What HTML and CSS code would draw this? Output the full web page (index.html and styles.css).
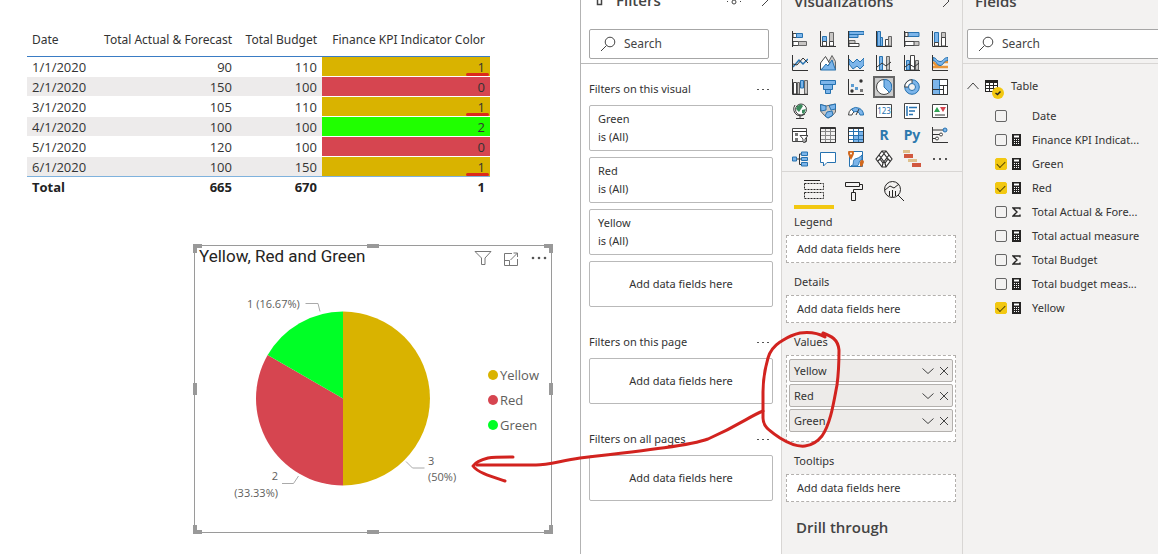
FILE: index.html
```html
<!DOCTYPE html>
<html lang="en">
<head>
<meta charset="utf-8">
<title>Report editor</title>
<link rel="stylesheet" href="styles.css">
</head>
<body>
<svg class="defs" width="0" height="0" aria-hidden="true">
  <symbol id="search" viewBox="0 0 16 16"><circle cx="10" cy="6" r="4.8"/><path d="M6.5 9.5 1 15"/></symbol>
  <symbol id="calc" viewBox="0 0 9 12"><path fill="#252423" stroke="none" d="M0 0h9v12H0z"/><path fill="#fff" stroke="none" d="M2 1.5h5v2H2zM2 5h1v1H2zM4 5h1v1H4zM6 5h1v1H6zM2 7h1v1H2zM4 7h1v1H4zM6 7h1v1H6zM2 9h1v1H2zM4 9h1v1H4zM6 9h1v1H6z"/></symbol>
  <symbol id="sigma" viewBox="0 0 9 12"><path d="M8 3.5V2H1l4 4-4 4h7V8.5" stroke="#252423" stroke-width="1.4"/></symbol>
  <symbol id="down" viewBox="0 0 12 12"><path d="m.5 3.5 5.500 5 5.500-5"/></symbol>
  <symbol id="close" viewBox="0 0 12 12"><path d="m2 2 8 8M10 2 2 10"/></symbol>
  <symbol id="dots" viewBox="0 0 12 4"><path fill="#555" stroke="none" d="M0 2h2v1H0zM5 2h2v1H5zM10 2h2v1h-2z"/></symbol>
</svg>
<div class="app">
  <main class="canvas">
    <table class="data">
      <thead><tr><th>Date</th><th>Total Actual &amp; Forecast</th><th>Total Budget</th><th>Finance KPI Indicator Color</th></tr></thead>
      <tbody>
        <tr><td>1/1/2020</td><td>90</td><td>110</td><td class="amber marked">1</td></tr>
        <tr><td>2/1/2020</td><td>150</td><td>100</td><td class="red">0</td></tr>
        <tr><td>3/1/2020</td><td>105</td><td>110</td><td class="amber marked">1</td></tr>
        <tr><td>4/1/2020</td><td>100</td><td>100</td><td class="green">2</td></tr>
        <tr><td>5/1/2020</td><td>120</td><td>100</td><td class="red">0</td></tr>
        <tr><td>6/1/2020</td><td>100</td><td>150</td><td class="amber marked">1</td></tr>
      </tbody>
      <tfoot><tr><td>Total</td><td>665</td><td>670</td><td>1</td></tr></tfoot>
    </table>

    <section class="visual">
      <i class="grip nw"></i><i class="grip ne"></i><i class="grip sw"></i><i class="grip se"></i>
      <i class="grip n"></i><i class="grip s"></i><i class="grip w"></i><i class="grip e"></i>
      <header class="visual-head">
        <h1>Yellow, Red and Green</h1>
        <div class="visual-tools">
          <button aria-label="Filter"><svg width="18" height="18" viewBox="0 0 18 18"><path d="M1 1.500h16l-6 6.500v6.500H7.500V8z"/></svg></button>
          <button aria-label="Focus mode"><svg width="18" height="18" viewBox="0 0 18 18"><path d="M10 3.500H2.500v12h13V9M2.500 10.500h5v5M8.500 10l7-7M11.500 3h4v4"/></svg></button>
          <button aria-label="More options"><svg width="18" height="18" viewBox="0 0 18 18"><g fill="#555" stroke="none"><circle cx="3" cy="8" r="1.300"/><circle cx="9" cy="8" r="1.300"/><circle cx="15" cy="8" r="1.300"/></g></svg></button>
        </div>
      </header>
      <div class="visual-body">
        <svg class="pie" width="240" height="240" viewBox="223 280 240 240" role="img" aria-label="Pie chart">
          <path fill="#d9b300" d="M343 311.500a87 87 0 0 1 0 174z"/>
          <path fill="#d64550" d="M343 398.500v87a87 87 0 0 1-75.340-130.500z"/>
          <path fill="#00ff26" d="M343 398.500l-75.340-43.500a87 87 0 0 1 75.340-43.500z"/>
          <path class="leader" d="M305.500 303.500h12.500l2 8M406 461.500l6.500 6.500h12M282 483.500h11.500l5-7.500"/>
          <text x="247" y="308">1 (16.67%)</text>
          <text x="428" y="465">3</text><text x="428" y="481">(50%)</text>
          <text x="278" y="480" text-anchor="end">2</text><text x="278" y="497" text-anchor="end">(33.33%)</text>
        </svg>
        <ul class="legend">
          <li class="k-amber">Yellow</li><li class="k-red">Red</li><li class="k-green">Green</li>
        </ul>
      </div>
    </section>
  </main>

  <aside class="pane filters">
    <header class="pane-head">
      <svg class="funnel" width="9" height="12" viewBox="0 0 9 12"><path d="M2.500 0v10.500h4V0" stroke-width="1.500"/></svg>
      <h2>Filters</h2>
      <svg class="eye" width="14" height="10" viewBox="0 0 14 10"><circle cx="7" cy="7" r="2"/><path d="M1 6 0 7M3 3v2M11 3v2M13 6l1 1"/></svg>
      <svg width="12" height="14" viewBox="0 0 12 14"><path d="m3 1 6 6-6 6"/></svg>
    </header>
    <div class="search-row"><label class="search"><svg width="16" height="16"><use href="#search"/></svg><input placeholder="Search" aria-label="Search filters"></label></div>
    <section class="group">
      <h3>Filters on this visual <button aria-label="More"><svg width="12" height="4"><use href="#dots"/></svg></button></h3>
      <div class="card"><span>Green</span><span>is (All)</span></div>
      <div class="card"><span>Red</span><span>is (All)</span></div>
      <div class="card"><span>Yellow</span><span>is (All)</span></div>
      <div class="card drop">Add data fields here</div>
    </section>
    <section class="group">
      <h3>Filters on this page <button aria-label="More"><svg width="12" height="4"><use href="#dots"/></svg></button></h3>
      <div class="card drop">Add data fields here</div>
    </section>
    <section class="group">
      <h3>Filters on all pages <button aria-label="More"><svg width="12" height="4"><use href="#dots"/></svg></button></h3>
      <div class="card drop">Add data fields here</div>
    </section>
  </aside>

  <aside class="pane viz">
    <header class="pane-head">
      <h2>Visualizations</h2>
      <svg width="12" height="14" viewBox="0 0 12 14"><path d="m3 1 6 6-6 6"/></svg>
    </header>
    <div class="gallery">
      <button aria-label="Stacked bar"><svg viewBox="0 0 16 16"><path class="w" d="M1 2.500h4v4H1z"/><path class="b" d="M4.500 2.500h6v4h-6z"/><path class="w" d="M1 10.500h6v4H1z"/><path class="g" d="M6.500 10.500h8v4h-8z"/><path class="k" d="M.5 0v16"/></svg></button>
      <button aria-label="Stacked column"><svg viewBox="0 0 16 16"><path class="b" d="M2.500 5.500h4V15h-4z"/><path class="w" d="M2.500 10.500h4V15h-4z"/><path class="g" d="M9.500 1.500h4V15h-4z"/><path class="w" d="M9.500 10.500h4V15h-4z"/><path class="k" d="M.5 0v15.500H16"/></svg></button>
      <button aria-label="Clustered bar"><svg viewBox="0 0 16 16"><path class="b" d="M1 .5h15v3H1zM1 3.500h9v3H1z"/><path class="g" d="M1 9.500h6v3H1z"/><path class="w" d="M1 12.500h10v3H1z"/><path class="k" d="M.5 0v16"/></svg></button>
      <button aria-label="Clustered column"><svg viewBox="0 0 16 16"><path class="b" d="M1.500.5h3V15h-3zM4.500 6.500h2V15h-2z"/><path class="w" d="M9.500 8.500h3V15h-3z"/><path class="g" d="M12.500 5.500h3V15h-3z"/><path class="k" d="M.5 0v15.500H16"/></svg></button>
      <button aria-label="100% stacked bar"><svg viewBox="0 0 16 16"><path class="b" d="M1 1.500h14v4H1z"/><path class="w" d="M1 1.500h3v4H1z"/><path class="g" d="M1 10.500h14v4H1z"/><path class="w" d="M1 10.500h9v4H1z"/><path class="k" d="M.5 0v16"/></svg></button>
      <button aria-label="100% stacked column"><svg viewBox="0 0 16 16"><path class="b" d="M2.500 1.500h4V15h-4z"/><path class="w" d="M2.500 11.500h4V15h-4z"/><path class="g" d="M9.500 1.500h4V15h-4z"/><path class="w" d="M9.500 6.500h4V15h-4z"/><path class="k" d="M.5 0v15.500H16"/></svg></button>

      <button aria-label="Line"><svg viewBox="0 0 16 16"><path class="l" d="m1 12 6-7 4 4 5-5" stroke-width="1.500"/><path class="k" d="m1 9 4 1 6-7 5 5M.5 0v15.500H16"/></svg></button>
      <button aria-label="Area"><svg viewBox="0 0 16 16"><path class="g" d="M8 8 12 .5l3.500 6V15z"/><path class="w" d="M.5 15V8L5.500 1.500 10 9z"/><path class="b" d="m1 15 5-6 2 2 4-6 3.500 10z"/></svg></button>
      <button aria-label="Stacked area"><svg viewBox="0 0 16 16"><path class="b" d="m1 4 4 4 4-4 3 3 4-4v7l-4 4-3-3-4 3-4-5z"/><path class="k" d="M.5 0v15.500H16"/></svg></button>
      <button aria-label="Line and stacked column"><svg viewBox="0 0 16 16"><path class="b" d="M3.500 1.500h3V15h-3z"/><path class="g" d="M10.500 1.500h3V15h-3z"/><path class="k" d="m1 12 5-4 4 3 5-4M.5 0v15.500H16"/></svg></button>
      <button aria-label="Line and clustered column"><svg viewBox="0 0 16 16"><path class="b" d="M2.500 5.500h3V15h-3z"/><path class="w" d="M6.500.5h4V15h-4z"/><path class="g" d="M11.500 5.500h3V15h-3z"/><path class="k" d="m1 12 4-3 5 3 5-4M.5 0v15.500H16"/></svg></button>
      <button aria-label="Ribbon"><svg viewBox="0 0 16 16"><path d="M1 12h4l6-5h5M1 7l5 5h10" stroke="#e8963b" stroke-width="2.500"/><path class="b" d="M1 2.500c4 0 3 4 7 4s3-4 8-4v3c-5 0-4 5-8 5s-3-5-7-5z"/><path class="k" d="M.5 0v15.500H16"/></svg></button>

      <button aria-label="Waterfall"><svg viewBox="0 0 16 16"><path class="w" d="M1.500 3.500h3V15h-3z"/><path class="g" d="M5.500 3.500h2V15h-2zM12.500 1.500h3V15h-3z"/><path class="b" d="M8.500 1.500h3V9h-3z"/><path class="k" d="M.5 0v15.500H16"/></svg></button>
      <button aria-label="Funnel"><svg viewBox="0 0 16 16"><path class="b" d="M.5 1.500h15v4H.5zM3.500 5.500h9v5h-9zM5.500 10.500h5v4h-5z"/></svg></button>
      <button aria-label="Scatter"><svg viewBox="0 0 16 16"><g fill="#333"><circle cx="13" cy="2" r="1.700"/><circle cx="4" cy="12" r="1.700"/></g><path fill="#5b9bd0" d="M3 5h3v3H3zM7 8h3v3H7z"/><path fill="#777" d="M12 10h3v3h-3z"/><path class="k" d="M.5 0v15.500H16"/></svg></button>
      <button class="chosen" aria-label="Pie"><svg viewBox="0 0 16 16"><circle class="w" cx="8" cy="8" r="7.500"/><path class="b" d="M8 .5V8l5.500 5.500A7.500 7.500 0 0 0 8 .5z"/></svg></button>
      <button aria-label="Donut"><svg viewBox="0 0 16 16"><circle class="b" cx="8" cy="8" r="7.300"/><path class="w" d="M8 .7V4.500A3.500 3.500 0 0 0 4.500 8H.7A7.300 7.300 0 0 1 8 .7z"/><circle class="hole" cx="8" cy="8" r="3.500"/></svg></button>
      <button aria-label="Treemap"><svg viewBox="0 0 16 16"><path class="w" d="M.5.500h15v15H.5z"/><path class="b" d="M.5.500h7v15h-7z"/><path class="k" d="M.5 10.500h7M7.500 6.500h8M11.500 6.500v9M7.500 10.500h4M.5.500h15v15H.5z"/></svg></button>

      <button aria-label="Map"><svg viewBox="0 0 16 16"><circle class="w" cx="9" cy="6.500" r="5.500"/><path fill="#3b8a5c" d="m5 3 4-2 2 2-2 3-2 3-3-3zM10 7l4-1-2 5-2-1z"/><path class="k" d="M3 2a7 7 0 0 0 2 10 7 7 0 0 0 8-1M8 13v2.500M4 15.500h8"/></svg></button>
      <button aria-label="Filled map"><svg viewBox="0 0 16 16"><path class="g" d="M.5 1.500 6 3l9.500-2v8L12 13l-4 2-4-3-3.500-4z"/><path class="b" d="M.5 1.500 6 3v4L1 8zM9 2.500l6.500-1.500v5L11 7zM7 9l5-1 1 4-5 3-3-2z"/></svg></button>
      <button aria-label="Gauge"><svg viewBox="0 0 16 16"><path class="w" d="M.5 12a7.500 7.500 0 0 1 3-6l2.500 3A4 4 0 0 0 4 12z"/><path class="b" d="M3.500 6a7.500 7.500 0 0 1 12 6H12a4 4 0 0 0-6-3z"/><path class="k" d="m8 12 3-6"/></svg></button>
      <button aria-label="Card"><svg viewBox="0 0 16 16"><path class="w" d="M.5 1.500h15v13H.5z"/><text x="8" y="11">123</text></svg></button>
      <button aria-label="Multi-row card"><svg viewBox="0 0 16 16"><path class="w" d="M.5.500h15v15H.5z"/><path stroke="#2672b0" stroke-width="1.500" d="M5 4.500h8M5 8h6M5 11.500h4M3 3v10"/></svg></button>
      <button aria-label="KPI"><svg viewBox="0 0 16 16"><path class="w" d="M.5 1.500h15v13H.5z"/><path fill="#31a354" d="m2 9 3-5 3 5z"/><path fill="#d64550" d="m8 4 3 5 3-5z"/><path class="k" d="M3 12h10"/></svg></button>

      <button aria-label="Slicer"><svg viewBox="0 0 16 16"><path class="w" d="M.5 1.500h14v13H.5z"/><path class="k" d="M.5 4.500h14"/><path fill="#777" d="M3 6h3v3H3zM3 11h3v3H3z"/><path class="w" d="M8 8.500h8l-3 3.500v4l-2-1v-3z"/></svg></button>
      <button aria-label="Table"><svg viewBox="0 0 16 16"><path fill="#fff" stroke="#888" d="M.5 4.500h15M.5 8.500h15M.5 12.500h15M5.500.500v15M10.500.500v15"/><path class="k" d="M.5 1.500h15M.5.500h15v15H.5z"/></svg></button>
      <button aria-label="Matrix"><svg viewBox="0 0 16 16"><path class="w" d="M.5.500h15v15H.5z"/><path fill="#7cb5ea" d="M5 9h11v7H5zM11 5h5v11h-5z"/><path stroke="#2672b0" d="M.5 4.500h15M.5 8.500h15M.5 12.500h15M5.500.500v15M10.500.500v15"/><path class="k" d="M.5.500h15v15H.5zM.5 1.500h15"/></svg></button>
      <button class="glyph" aria-label="R script">R</button>
      <button class="glyph" aria-label="Python script">Py</button>
      <button aria-label="Key influencers"><svg viewBox="0 0 16 16"><path class="k" d="M.5 0v15.500H16M1 3h11M1 7.500h8M1 11.500h4"/><circle class="b" cx="13" cy="3" r="2"/><circle class="w" cx="9" cy="7.500" r="1.500"/><circle class="w" cx="5" cy="11.500" r="1.500"/></svg></button>

      <button aria-label="Decomposition tree"><svg viewBox="0 0 16 16"><path class="k" d="M4 8h6M7.500 3v10.500H10M7.500 3H10"/><path class="b" d="M.5 6h4v4h-4zM9.500 1h6v3.500h-6zM9.500 6.500h6v3h-6zM9.500 11.500h6V15h-6z"/></svg></button>
      <button aria-label="Q&amp;A"><svg viewBox="0 0 16 16"><path class="w l" d="M.5 1.500h15v10H7L3.500 15v-3.500h-3z"/></svg></button>
      <button aria-label="Shape map"><svg viewBox="0 0 16 16"><path class="w l" d="M1.500.5h13v15h-13z"/><path class="b" d="M3 15c4-1 1-6 4-7s4-1 7-4v5c-4 0-2 5-5 6z"/><path fill="#d2691e" d="M0 2a3 3 0 0 1 6 0c0 2-3 7-3 7S0 4 0 2zM12 11a2 2 0 0 1 4 0l-2 5-2-1z"/><circle cx="3" cy="2.500" r="1" fill="#fff"/></svg></button>
      <button class="large" aria-label="Power Apps"><svg viewBox="0 0 18 18"><path fill="#fff" stroke="#333" stroke-width="1.200" d="M7 1h4l6 8-6 8H7L1 9z"/><path class="k" stroke-width="1.200" d="M7 1 13 9l-3 4-6-8M11 1 5 9l3 4 6-8M5 9l-2 2M13 9l2 2M8 13l-1 4M10 13l1 4"/></svg></button>
      <button class="large" aria-label="Gantt"><svg viewBox="0 0 18 18"><path fill="#dfc18d" d="M0 0h7v3H0zM5 9h9v3H5z"/><path fill="#d1583f" d="M1 4h9v4H1zM9 13h9v4H9z"/></svg></button>
      <button aria-label="More visuals"><svg viewBox="0 0 16 16"><path fill="#555" d="M1 7h2v2H1zM7 7h2v2H7zM13 7h2v2h-2z"/></svg></button>
    </div>
    <div class="tabs">
      <button class="active" aria-label="Fields"><svg viewBox="0 0 20 20"><path d="M0 .5h16"/><path stroke-dasharray="2 1" d="M.5 3.500h19v6H.5zM.5 12.500h19v6H.5z"/></svg></button>
      <button aria-label="Format"><svg viewBox="0 0 20 20"><path d="M1.500 1.500h14v4h-14zM15.500 3.500h3v5H9.500V12M7.500 11.500h4v8h-4z"/></svg></button>
      <button aria-label="Analytics"><svg viewBox="0 0 20 20"><circle cx="8.500" cy="8.500" r="8"/><path d="m14 14 6 6M1 9l5-4 4 2 5-4M5.500 10v5M8.500 9v7M11.500 10v5"/></svg></button>
    </div>
    <section class="well"><h3>Legend</h3><div class="slot">Add data fields here</div></section>
    <section class="well"><h3>Details</h3><div class="slot">Add data fields here</div></section>
    <section class="well"><h3>Values</h3>
      <div class="slot filled">
        <div class="chip"><span>Yellow</span><button aria-label="Yellow menu"><svg><use href="#down"/></svg></button><button aria-label="Remove Yellow"><svg><use href="#close"/></svg></button></div>
        <div class="chip"><span>Red</span><button aria-label="Red menu"><svg><use href="#down"/></svg></button><button aria-label="Remove Red"><svg><use href="#close"/></svg></button></div>
        <div class="chip"><span>Green</span><button aria-label="Green menu"><svg><use href="#down"/></svg></button><button aria-label="Remove Green"><svg><use href="#close"/></svg></button></div>
      </div>
    </section>
    <section class="well"><h3>Tooltips</h3><div class="slot">Add data fields here</div></section>
    <h2 class="drill">Drill through</h2>
  </aside>

  <aside class="pane fields">
    <header class="pane-head"><h2>Fields</h2></header>
    <div class="search-row"><label class="search"><svg width="16" height="16"><use href="#search"/></svg><input placeholder="Search" aria-label="Search fields"></label></div>
    <div class="table-name">
      <svg width="12" height="12" viewBox="0 0 12 12"><path d="m.5 9 5.500-6 5.500 6"/></svg>
      <svg class="table-icon" width="20" height="20" viewBox="0 0 20 20"><path fill="#252423" stroke="none" d="M0 1h13v12H0z"/><path fill="#fff" stroke="none" d="M1 4h3v2H1zM5 4h3v2H5zM9 4h3v2H9zM1 7h3v2H1zM5 7h3v2H5zM9 7h3v2H9zM1 10h3v2H1zM5 10h3v2H5zM9 10h3v2H9z"/><circle cx="13" cy="14" r="6" fill="#f2c811" stroke="none"/><path stroke="#252423" stroke-width="1.500" d="m10.500 14 2 1.500 3-3"/></svg>
      <span>Table</span>
    </div>
    <ul class="field-list">
      <li><label><input type="checkbox"><i></i><span>Date</span></label></li>
      <li><label><input type="checkbox"><svg><use href="#calc"/></svg><span>Finance KPI Indicat...</span></label></li>
      <li><label><input type="checkbox" checked><svg><use href="#calc"/></svg><span>Green</span></label></li>
      <li><label><input type="checkbox" checked><svg><use href="#calc"/></svg><span>Red</span></label></li>
      <li><label><input type="checkbox"><svg><use href="#sigma"/></svg><span>Total Actual &amp; Fore...</span></label></li>
      <li><label><input type="checkbox"><svg><use href="#calc"/></svg><span>Total actual measure</span></label></li>
      <li><label><input type="checkbox"><svg><use href="#sigma"/></svg><span>Total Budget</span></label></li>
      <li><label><input type="checkbox"><svg><use href="#calc"/></svg><span>Total budget meas...</span></label></li>
      <li><label><input type="checkbox" checked><svg><use href="#calc"/></svg><span>Yellow</span></label></li>
    </ul>
  </aside>

  <svg class="ink" width="700" height="554" viewBox="458 0 700 554" aria-hidden="true">
    <path d="M825 337C818 333 808 332 800 333C790 335 785 339 780 342C774 346 770 351 768 358C764 372 763 382 763 392V418C763 427 770 431 780 438C788 443 796 447 805 446C813 445 818 441 822 436C831 423 834 400 837 385C839 370 839 358 839 350C838 339 831 336 823 333"/>
    <path d="M763 411C748 417 742 424 708 439C692 445 650 450 580 458C560 461 548 465 536 465H477"/>
    <path d="M513 457C500 457 494 457 488 458C480 460 475 463 473 466C478 473 493 477 505 481"/>
  </svg>
</div>
</body>
</html>
```
FILE: styles.css
```css
* { box-sizing: border-box; }
body {
  margin: 0;
  overflow: hidden;
  font: 12px/18px "Noto Sans", "Open Sans", sans-serif;
  color: #333;
  background: #fff;
}
h1, h2, h3, ul { margin: 0; padding: 0; font-weight: 400; }
ul { list-style: none; }
button { padding: 0; border: 0; background: none; font: inherit; color: inherit; }
svg { display: block; flex: none; fill: none; stroke: #444; }
.defs { position: absolute; }

.app {
  position: relative;
  display: grid;
  grid-template-columns: minmax(0, 1fr) 201px 181px 196px;
  min-height: 100vh;
  overflow: hidden;
}

/* report canvas */
.canvas { padding: 24px 28px 20px 27px; }
.data { width: 463px; border-collapse: separate; border-spacing: 0; line-height: 18px; }
.data th, .data td { padding: 0 5px; text-align: right; white-space: nowrap; font-weight: 400; }
.data td { font-family: "Open Sans", sans-serif; font-size: 13px; }
.data th:first-child, .data td:first-child { text-align: left; width: 65px; }
.data th:nth-child(2) { width: 145px; }
.data th:nth-child(3) { width: 85px; }
.data th { height: 33px; border-bottom: 1px solid #3a7cc4; }
.data tbody td { height: 20px; border-bottom: 1px solid #fff; }
.data tbody tr:nth-child(even) td:not([class]) { background: #edebeb; }
.data tbody tr:last-child td { border-bottom-color: #7fb2dd; }
.data tfoot td { height: 20px; font-weight: 700; color: #222; }
.data .amber { background: #d9b300; }
.data .red { background: #d64550; }
.data .green { background: #20ff00; }
.data .marked { position: relative; }
.marked::after {
  content: "";
  position: absolute;
  right: 1px;
  bottom: 0;
  width: 23px;
  height: 3px;
  border-radius: 2px;
  background: #dc2a1c;
}

.visual {
  position: relative;
  width: 358px;
  min-height: 288px;
  margin: 48px 0 0 167px;
  border: 1px solid #9a9a9a;
}
.grip { position: absolute; border: 0 solid #999; width: 9px; height: 9px; }
.nw { top: -2px; left: -2px; border-width: 4px 0 0 4px; }
.ne { top: -2px; right: -2px; border-width: 4px 4px 0 0; }
.sw { bottom: -2px; left: -2px; border-width: 0 0 4px 4px; }
.se { bottom: -2px; right: -2px; border-width: 0 4px 4px 0; }
.n, .s { left: calc(50% - 6px); width: 12px; height: 4px; background: #999; }
.w, .e { top: calc(50% - 6px); width: 4px; height: 12px; background: #999; }
.n { top: -2px; }
.s { bottom: -2px; }
.w { left: -2px; }
.e { right: -2px; }
.visual-head { display: flex; justify-content: space-between; padding: 0 3px 0 4px; }
.visual-head h1 { font: 17px/20px Roboto, sans-serif; color: #252423; }
.visual-tools { display: flex; gap: 10px; padding-top: 4px; }
.visual-tools svg { stroke: #777; }
.visual-body { display: flex; align-items: center; justify-content: space-between; padding: 12px 12px 0 28px; font-family: "Open Sans", sans-serif; }
.pie { font-size: 11px; }
.pie text { fill: #605e5c; stroke: none; }
.pie path { stroke: none; }
.pie .leader { stroke: #aaa; }
.legend { display: grid; gap: 7px; font-size: 13px; color: #605e5c; }
.legend li { display: flex; align-items: center; gap: 2px; }
.legend li::before { content: ""; width: 10px; height: 10px; border-radius: 50%; background: #d9b300; }
.legend .k-red::before { background: #d64550; }
.legend .k-green::before { background: #00ff26; }

/* side panes */
.pane { border-left: 1px solid #d8d6d4; background: #f3f2f1; font-size: 11px; }
.filters { border-left: 1px solid #b3b3b3; background: #fff; }
.pane-head { display: flex; align-items: center; gap: 12px; height: 48px; margin-top: -20px; padding: 0 10px 6px 12px; }
.pane-head h2, .drill { font-size: 15px; line-height: 20px; font-weight: 600; color: #444; font-family: "Open Sans", sans-serif; }
.pane-head h2 { flex: 1; }
.filters .pane-head { padding: 0 10px 9px 14px; }
.eye { margin-right: 6px; }
.search-row { padding: 1px 12px 4px 8px; border-bottom: 1px solid #b9b9b9; }
.search { display: flex; align-items: center; gap: 8px; height: 30px; padding: 0 10px; border: 1px solid #a6a6a6; border-radius: 2px; background: #fff; }
.search input { width: 100%; min-width: 0; padding: 0; border: 0; outline: 0; font: inherit; font-size: 12px; background: none; }
.search input::placeholder { color: #444; opacity: 1; }

.group { display: grid; gap: 6px; padding: 0 8px; margin-bottom: 26px; }
.search-row + .group { margin-top: 16px; }
.group h3, .well h3 { font-size: 11px; line-height: 18px; }
.group h3 { display: flex; align-items: center; justify-content: space-between; padding-right: 4px; margin-bottom: 1px; }
.card { display: flex; flex-direction: column; justify-content: center; height: 46px; padding: 0 8px; border: 1px solid #b9b9b9; border-radius: 2px; }
.drop { align-items: center; }

.gallery { display: grid; grid-template-columns: repeat(6, 28px); grid-auto-rows: 24px; padding: 0 4px; margin-top: -1px; }
.gallery button { display: grid; place-items: center; }
.gallery svg { width: 16px; height: 16px; stroke: none; }
.gallery .large svg { width: 18px; height: 18px; }
.gallery .k { stroke: #333; fill: none; }
.gallery .b { fill: #7cb5ea; stroke: #2672b0; }
.gallery .g { fill: #c8c6c4; stroke: #666; }
.gallery .w { fill: #fff; stroke: #444; }
.gallery .l { stroke: #2672b0; }
.gallery .hole { fill: #f3f2f1; stroke: #2672b0; }
.gallery path.l:not(.w) { fill: none; }
.gallery text { font-size: 8px; text-anchor: middle; fill: #2672b0; }
.gallery .chosen { justify-self: center; width: 22px; height: 22px; align-self: center; border: 2px solid #666; background: #ccc; }
.gallery .glyph { font-size: 14px; font-weight: 700; color: #2d79ae; }
.tabs { display: flex; border-top: 1px solid #d8d6d4; padding: 0 12px; margin-bottom: 4px; }
.tabs button { width: 40px; height: 37px; padding: 8px 10px; }
.tabs button.active { border-bottom: 4px solid #f2c811; }
.tabs svg { width: 20px; height: 20px; stroke: #252423; }

.well { padding: 0 6px 0 4px; margin-bottom: 10px; }
.well h3 { padding: 0 8px 4px; }
.slot { min-height: 28px; padding: 4px 10px; border: 1px dashed #b3b0ad; background: #fff; }
.filled { display: grid; gap: 2px; padding: 3px 2px 9px; }
.chip { display: flex; align-items: center; gap: 4px; height: 23px; padding: 0 2px 0 4px; border: 1px solid #b3b0ad; border-radius: 2px; background: #edebe9; }
.chip span { flex: 1; }
.chip svg { width: 12px; height: 12px; }
.drill { padding: 5px 14px; }

.fields .search-row { padding: 1px 0 4px 4px; border-color: #d8d6d4; }
.fields .search { margin-right: -8px; }
.table-name { display: flex; align-items: center; gap: 6px; padding: 13px 4px 9px; }
.table-name .table-icon { margin-bottom: -6px; }
.field-list label { display: flex; align-items: center; gap: 5px; height: 24px; padding-left: 32px; white-space: nowrap; }
.field-list svg, .field-list i { width: 9px; height: 12px; }
.field-list span { padding-left: 6px; }
.field-list input { appearance: none; display: grid; width: 12px; height: 12px; margin: 0; border: 1px solid #666; border-radius: 2px; }
.field-list input:checked { border-color: #f2c811; background: #f2c811; }
.field-list input:checked::after { content: ""; width: 7px; height: 4px; margin: 2px 0 0 1px; border: solid #554600; border-width: 0 0 1px 1px; transform: rotate(-45deg); }

/* hand-drawn marks, held to the docked panes */
.ink { position: absolute; top: 0; right: 0; pointer-events: none; stroke: #d2231f; stroke-width: 3; stroke-linecap: round; stroke-linejoin: round; }
```
